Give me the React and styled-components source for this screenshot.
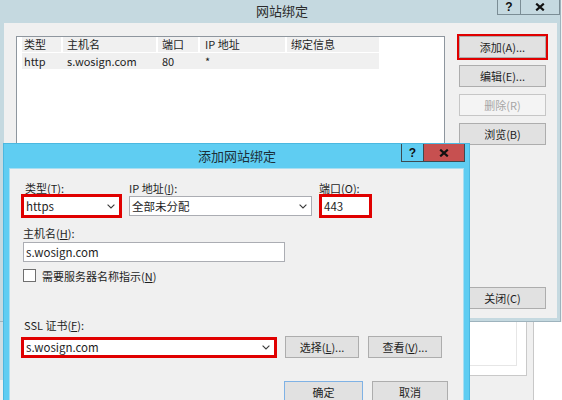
import React from "react";
import styled, { createGlobalStyle } from "styled-components";

const GlobalStyle = createGlobalStyle`
    html, body {
        margin: 0;
        padding: 0;
    }
    body {
        width: 562px;
        height: 400px;
        overflow: hidden;
        font-family: "Noto Sans CJK SC", "Noto Sans", sans-serif;
        font-size: 11px;
        color: #1e1e1e;
    }
`

const Desktop = styled.div`
    position: relative;
    width: 562px;
    height: 400px;
    overflow: hidden;
    background: #f0f0f0;
`

/* windows lying behind, bottom corners */
const BackWindow = styled.div`
    position: absolute;
    left: 400px;
    top: 322px;
    right: 0;
    bottom: 0;
    display: flex;
`
const BackPane = styled.div`
    width: 126px;
    height: 53px;
    background: #fff;
    border-right: 1px solid #c9c9c9;
    border-bottom: 1px solid #c9c9c9;
`
const BackInner = styled.div`
    width: 116px;
    height: 43px;
    border-right: 1px solid #e6e6e6;
    border-bottom: 1px solid #e6e6e6;
`
const BackColumn = styled.div`
    flex: 1;
    margin-left: 6px;
    background: #fff;
    border-left: 1px solid #c8c8c8;
`
const BackStrip = styled.div`
    position: absolute;
    left: 0;
    top: 322px;
    width: 4px;
    height: 58px;
    background: #cddde3;
`

/* shared window parts */
const TitleBar = styled.div`
    display: grid;
    grid-template-columns: 1fr auto 1fr;
    height: ${p => p.$h}px;
    margin-right: ${p => p.$pull}px;
`
const Title = styled.div`
    grid-column: 2;
    font-size: 13px;
    line-height: ${p => p.$h}px;
    color: ${p => p.$color};
`
const Captions = styled.div`
    grid-column: 3;
    justify-self: end;
    align-self: start;
    display: flex;
`
const CaptionButton = styled.div`
    box-sizing: border-box;
    width: ${p => p.$w}px;
    height: ${p => p.$h}px;
    display: flex;
    align-items: center;
    justify-content: center;
    background: ${p => p.$bg || "transparent"};
    border: 1px solid ${p => p.$line};
    border-top: none;
    & + & {
        border-left: none;
    }
    font-family: "Liberation Sans", sans-serif;
    font-weight: bold;
    font-size: 12px;
    color: #111;
`

const Acc = styled.span`
    text-decoration: underline;
    text-underline-offset: 1px;
`

const WinButton = styled.button`
    box-sizing: border-box;
    width: ${p => p.$w ? `${p.$w}px` : "100%"};
    height: 22px;
    padding: 0;
    font: inherit;
    font-size: 11px;
    background: ${p => p.$off ? "#f4f4f4" : "#e1e1e1"};
    color: ${p => p.$off ? "#a6a6a6" : "#1e1e1e"};
    border: 1px solid ${p => p.$off ? "#c6c6c6" : p.$primary ? "#7fb2e5" : "#adadad"};
    outline: ${p => p.$flag ? "2px solid #e00000" : "none"};
    margin-left: ${p => p.$shift || 0}px;
    flex-shrink: 0;
`

/* the site bindings window */
const OuterWindow = styled.div`
    position: absolute;
    left: 0;
    top: 0;
    width: 561px;
    height: 322px;
    box-sizing: border-box;
    display: flex;
    flex-direction: column;
    padding: 0 3px 3px 4px;
    background: #c5d9e0;
    border-right: 1px solid #9eb3bd;
    border-bottom: 1px solid #9eb3bd;
`
const OuterClient = styled.div`
    flex: 1;
    display: flex;
    gap: 14px;
    padding: 13px 11px 9px 12px;
    background: #f0f0f0;
`
const ListBox = styled.div`
    width: 427px;
    background: #fff;
    border: 1px solid #8e969e;
`
const ListRow = styled.div`
    display: flex;
    gap: 2px;
    margin: ${p => p.$head ? "0 0 1px 5px" : "0 0 0 5px"};
    width: ${p => p.$head ? "auto" : "357px"};
    height: ${p => p.$head ? 15 : 16}px;
    background: ${p => p.$head ? "transparent" : "#f0f0f0"};
`
const ListCell = styled.div`
    width: ${p => p.$w}px;
    padding-left: ${p => p.$pad}px;
    box-sizing: border-box;
    line-height: ${p => p.$head ? 15 : 16}px;
    background: ${p => p.$head ? "#f0f0f0" : "transparent"};
    white-space: nowrap;
`
const ButtonColumn = styled.div`
    width: 87px;
    display: flex;
    flex-direction: column;
    gap: 7px;
    & > :last-child {
        margin-top: auto;
    }
`

/* the add binding dialog */
const Dialog = styled.div`
    position: absolute;
    left: 3px;
    top: 143px;
    width: 467px;
    height: 280px;
    box-sizing: border-box;
    display: flex;
    flex-direction: column;
    padding: 0 5px 5px 5px;
    background: #5fcdf2;
    border: 1px solid #4bb8e0;
`
const DialogClient = styled.div`
    flex: 1;
    display: flex;
    flex-direction: column;
    padding: 12px 15px 0 13px;
    background: #f0f0f0;
    border: 1px solid #a8def2;
`
const FieldRow = styled.div`
    display: flex;
    align-items: ${p => p.$center ? "center" : "flex-start"};
    gap: ${p => p.$gap}px;
    margin-top: ${p => p.$top || 0}px;
`
const FieldGroup = styled.div`
    display: flex;
    flex-direction: column;
    gap: 1px;
    margin-left: ${p => p.$shift || 0}px;
`
const Label = styled.div`
    line-height: 14px;
    padding-left: ${p => p.$pad || 0}px;
    margin-left: ${p => p.$shift || 0}px;
    margin-top: ${p => p.$top || 0}px;
    white-space: nowrap;
`
const Field = styled.div`
    box-sizing: border-box;
    width: ${p => p.$w}px;
    height: ${p => p.$h || 20}px;
    margin-top: ${p => p.$top || 0}px;
    display: flex;
    align-items: center;
    justify-content: space-between;
    padding: 0 4px 0 2px;
    background: #fff;
    border: 1px solid ${p => p.$flag ? "#e00000" : "#abadb3"};
    outline: ${p => p.$flag ? "2px solid #e00000" : "none"};
    font-size: 11.5px;
    white-space: nowrap;
    flex-shrink: 0;
`
const CheckRow = styled.label`
    display: flex;
    align-items: center;
    gap: 6px;
    margin-top: 7px;
    height: 13px;
    white-space: nowrap;
`
const CheckBox = styled.span`
    width: 11px;
    height: 11px;
    background: #fff;
    border: 1px solid #6f6f6f;
`
const DialogButtons = styled.div`
    display: flex;
    justify-content: flex-end;
    gap: 9px;
    margin-top: 23px;
`

function Chevron() {
    return (
        <svg width="8" height="5" viewBox="0 0 8 5">
            <path d="M0.6 0.6 L4 4 L7.4 0.6" fill="none" stroke="#3a3a3a" strokeWidth="1.1" />
        </svg>
    )
}

function CloseGlyph() {
    return (
        <svg width="10" height="8" viewBox="0 0 10 8">
            <path d="M1.2 0.6 L8.8 7.4 M8.8 0.6 L1.2 7.4" fill="none" stroke="#111" strokeWidth="2.1" />
        </svg>
    )
}

const columns = [
    {w: 39, pad: 2, head: "类型", cell: "http"},
    {w: 93, pad: 4, head: "主机名", cell: "s.wosign.com"},
    {w: 40, pad: 4, head: "端口", cell: "80"},
    {w: 85, pad: 5, head: "IP 地址", cell: "*"},
    {w: 92, pad: 4, head: "绑定信息", cell: ""},
]

function SiteBindings() {
    return (
        <OuterWindow>
            <TitleBar $h={23} $pull={-3}>
                <Title $h={21} $color="#2b2b2b">网站绑定</Title>
                <Captions>
                    <CaptionButton $w={24} $h={15} $line="#7b8d95">?</CaptionButton>
                    <CaptionButton $w={39} $h={15} $line="#7b8d95"><CloseGlyph /></CaptionButton>
                </Captions>
            </TitleBar>
            <OuterClient>
                <ListBox>
                    <ListRow $head>
                        {columns.map(c => <ListCell key={c.head} $w={c.w} $pad={c.pad} $head>{c.head}</ListCell>)}
                    </ListRow>
                    <ListRow>
                        {columns.map(c => <ListCell key={c.head} $w={c.w} $pad={c.pad}>{c.cell}</ListCell>)}
                    </ListRow>
                </ListBox>
                <ButtonColumn>
                    <WinButton $flag>添加(A)...</WinButton>
                    <WinButton>编辑(E)...</WinButton>
                    <WinButton $off>删除(R)</WinButton>
                    <WinButton>浏览(B)</WinButton>
                    <WinButton>关闭(C)</WinButton>
                </ButtonColumn>
            </OuterClient>
        </OuterWindow>
    )
}

function AddBinding() {
    return (
        <Dialog>
            <TitleBar $h={24} $pull={-1}>
                <Title $h={23} $color="#1c2f39">添加网站绑定</Title>
                <Captions>
                    <CaptionButton $w={23} $h={18} $line="#3d4a50">?</CaptionButton>
                    <CaptionButton $w={41} $h={18} $line="#3d4a50" $bg="#c75050"><CloseGlyph /></CaptionButton>
                </Captions>
            </TitleBar>
            <DialogClient>
                <FieldRow $gap={9}>
                    <FieldGroup>
                        <Label $pad={2}>类型(<Acc>T</Acc>):</Label>
                        <Field $w={97} $flag>https<Chevron /></Field>
                    </FieldGroup>
                    <FieldGroup>
                        <Label>IP 地址(<Acc>I</Acc>):</Label>
                        <Field $w={183}>全部未分配<Chevron /></Field>
                    </FieldGroup>
                    <FieldGroup>
                        <Label $shift={-2}>端口(<Acc>O</Acc>):</Label>
                        <Field $w={49} $flag>443</Field>
                    </FieldGroup>
                </FieldRow>
                <Label $top={10}>主机名(<Acc>H</Acc>):</Label>
                <Field $w={262} $top={2}>s.wosign.com</Field>
                <CheckRow>
                    <CheckBox />
                    <span>需要服务器名称指示(<Acc>N</Acc>)</span>
                </CheckRow>
                <Label $top={36} $pad={1}>SSL 证书(<Acc>F</Acc>):</Label>
                <FieldRow $gap={10} $center $top={4}>
                    <Field $w={252} $h={17} $flag>s.wosign.com<Chevron /></Field>
                    <WinButton $w={74}>选择(<Acc>L</Acc>)...</WinButton>
                    <WinButton $w={74} $shift={-1}>查看(<Acc>V</Acc>)...</WinButton>
                </FieldRow>
                <DialogButtons>
                    <WinButton $w={79} $primary>确定</WinButton>
                    <WinButton $w={76}>取消</WinButton>
                </DialogButtons>
            </DialogClient>
        </Dialog>
    )
}

export default function App() {
    return (
        <>
            <GlobalStyle />
            <Desktop>
                <BackWindow>
                    <BackPane><BackInner /></BackPane>
                    <BackColumn />
                </BackWindow>
                <BackStrip />
                <SiteBindings />
                <AddBinding />
            </Desktop>
        </>
    )
}
